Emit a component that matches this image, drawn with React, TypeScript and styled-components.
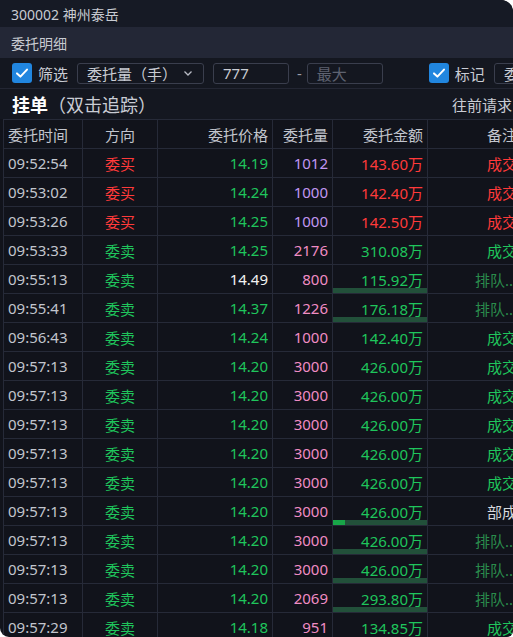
import React from 'react';
import styled, { createGlobalStyle } from 'styled-components';

const GlobalStyle = createGlobalStyle`
  html, body {
    margin: 0;
    padding: 0;
    background: #fff;
  }
  body {
    font-family: "Noto Sans", "Noto Sans CJK SC", sans-serif;
  }
`;

const red = '#ff3a3a';
const green = '#1fc55c';
const dimGreen = '#2a8c4c';

const Window = styled.div`
  width: 513px;
  height: 637px;
  overflow: hidden;
  background: #11131b;
  border-top-right-radius: 12px;
  border-bottom-left-radius: 9px;
  border-bottom-right-radius: 6px;
  display: flex;
  flex-direction: column;
  color: #c9ccd4;
`;

const TitleBar = styled.div`
  height: 27px;
  flex: none;
  display: flex;
  align-items: center;
  padding-left: 11px;
  background: #161a25;
  font-size: 14px;
  color: #c8cbd2;
`;

const SubHeader = styled.div`
  height: 31px;
  flex: none;
  display: flex;
  align-items: center;
  padding-left: 11px;
  background: #232736;
  font-size: 14px;
  color: #c8cbd2;
`;

const FilterBar = styled.div`
  height: 30px;
  flex: none;
  display: flex;
  align-items: center;
  padding-left: 12px;
  background: #141720;
  border-bottom: 1px solid #232633;
  white-space: nowrap;
  font-size: 15px;
`;

const Check = styled.span<{ $gap?: number }>`
  width: 20px;
  height: 20px;
  flex: none;
  border-radius: 3px;
  background: #2186df;
  display: flex;
  align-items: center;
  justify-content: center;
  margin-left: ${p => p.$gap ?? 0}px;
`;

const Label = styled.span`
  margin-left: 6px;
  color: #c9ccd4;
`;

const Box = styled.div<{ $w: number; $gap: number }>`
  width: ${p => p.$w}px;
  height: 21px;
  flex: none;
  box-sizing: border-box;
  border: 1px solid #3a3e4d;
  border-radius: 3px;
  margin-left: ${p => p.$gap}px;
  padding: 0 9px;
  display: flex;
  align-items: center;
  justify-content: space-between;
  font-size: 15px;
  color: #c9ccd4;
`;

const Placeholder = styled.span`
  color: #5e6270;
`;

const Dash = styled.span`
  margin-left: 8px;
  color: #9a9da6;
`;

const HeadRow = styled.div`
  height: 30px;
  flex: none;
  display: flex;
  align-items: center;
  justify-content: space-between;
  padding-left: 12px;
  background: #141720;
  white-space: nowrap;
`;

const HeadTitle = styled.div`
  font-size: 18px;
  color: #c9ccd4;
  b {
    color: #fff;
    font-weight: 700;
  }
`;

const HeadLink = styled.div`
  font-size: 15px;
  color: #c9ccd4;
  margin-right: 1px;
`;

const TableWrap = styled.div`
  flex: 1;
  padding-left: 3px;
  overflow: hidden;
`;

const Table = styled.table`
  border-collapse: collapse;
  table-layout: fixed;
  width: 640px;
  font-size: 15px;
  white-space: nowrap;
`;

const Th = styled.th<{ $align: string }>`
  height: 28px;
  padding: 0 4px;
  font-weight: 400;
  color: #c2c5cd;
  text-align: ${p => p.$align};
  border: 1px solid #262a38;
`;

const Td = styled.td<{ $align: string; $color: string; $bar?: number }>`
  height: 28px;
  padding: 0 4px;
  text-align: ${p => p.$align};
  color: ${p => p.$color};
  border: 1px solid #262a38;
  ${p =>
    p.$bar !== undefined
      ? `background-image: linear-gradient(to right, #18a648 ${p.$bar}px, #22503a ${p.$bar}px);
         background-size: 100% 5px;
         background-position: bottom;
         background-repeat: no-repeat;`
      : ''}
`;

type Row = {
  time: string;
  buy: boolean;
  price: string;
  qty: string;
  amount: string;
  note: '成交' | '排队...' | '部成';
  priceColor?: string;
  bar?: number;
};

const rows: Row[] = [
  { time: '09:52:54', buy: true, price: '14.19', qty: '1012', amount: '143.60万', note: '成交' },
  { time: '09:53:02', buy: true, price: '14.24', qty: '1000', amount: '142.40万', note: '成交' },
  { time: '09:53:26', buy: true, price: '14.25', qty: '1000', amount: '142.50万', note: '成交' },
  { time: '09:53:33', buy: false, price: '14.25', qty: '2176', amount: '310.08万', note: '成交' },
  { time: '09:55:13', buy: false, price: '14.49', qty: '800', amount: '115.92万', note: '排队...', priceColor: '#f2f2f2', bar: 0 },
  { time: '09:55:41', buy: false, price: '14.37', qty: '1226', amount: '176.18万', note: '排队...', bar: 0 },
  { time: '09:56:43', buy: false, price: '14.24', qty: '1000', amount: '142.40万', note: '成交' },
  { time: '09:57:13', buy: false, price: '14.20', qty: '3000', amount: '426.00万', note: '成交' },
  { time: '09:57:13', buy: false, price: '14.20', qty: '3000', amount: '426.00万', note: '成交' },
  { time: '09:57:13', buy: false, price: '14.20', qty: '3000', amount: '426.00万', note: '成交' },
  { time: '09:57:13', buy: false, price: '14.20', qty: '3000', amount: '426.00万', note: '成交' },
  { time: '09:57:13', buy: false, price: '14.20', qty: '3000', amount: '426.00万', note: '成交' },
  { time: '09:57:13', buy: false, price: '14.20', qty: '3000', amount: '426.00万', note: '部成', bar: 12 },
  { time: '09:57:13', buy: false, price: '14.20', qty: '3000', amount: '426.00万', note: '排队...', bar: 0 },
  { time: '09:57:13', buy: false, price: '14.20', qty: '3000', amount: '426.00万', note: '排队...', bar: 0 },
  { time: '09:57:13', buy: false, price: '14.20', qty: '2069', amount: '293.80万', note: '排队...', bar: 0 },
  { time: '09:57:29', buy: false, price: '14.18', qty: '951', amount: '134.85万', note: '成交' },
];

const noteColor = (r: Row) => {
  if (r.note === '排队...') return dimGreen;
  if (r.note === '部成') return '#d6d8de';
  return r.buy ? red : green;
};

const CheckMark = () => (
  <svg width="14" height="14" viewBox="0 0 14 14">
    <path d="M2 7.4 L5.4 10.6 L12 3.6" fill="none" stroke="#fff" strokeWidth="2" strokeLinecap="round" strokeLinejoin="round" />
  </svg>
);

const Chevron = () => (
  <svg width="12" height="12" viewBox="0 0 12 12">
    <path d="M2.5 4.5 L6 8 L9.5 4.5" fill="none" stroke="#b8bbc4" strokeWidth="1.3" />
  </svg>
);

const App = () => (
  <>
    <GlobalStyle />
    <Window>
      <TitleBar>300002 神州泰岳</TitleBar>
      <SubHeader>委托明细</SubHeader>
      <FilterBar>
        <Check><CheckMark /></Check>
        <Label>筛选</Label>
        <Box $w={127} $gap={9}>
          <span>委托量（手）</span>
          <Chevron />
        </Box>
        <Box $w={76} $gap={9}>777</Box>
        <Dash>-</Dash>
        <Box $w={76} $gap={5}><Placeholder>最大</Placeholder></Box>
        <Check $gap={46}><CheckMark /></Check>
        <Label>标记</Label>
        <Box $w={80} $gap={9}>委托量（手）</Box>
      </FilterBar>
      <HeadRow>
        <HeadTitle><b>挂单</b>（双击追踪）</HeadTitle>
        <HeadLink>往前请求</HeadLink>
      </HeadRow>
      <TableWrap>
        <Table>
          <colgroup>
            <col style={{ width: 79 }} />
            <col style={{ width: 75 }} />
            <col style={{ width: 115 }} />
            <col style={{ width: 60 }} />
            <col style={{ width: 95 }} />
            <col style={{ width: 94 }} />
            <col style={{ width: 122 }} />
          </colgroup>
          <thead>
            <tr>
              <Th $align="left">委托时间</Th>
              <Th $align="center">方向</Th>
              <Th $align="right">委托价格</Th>
              <Th $align="right">委托量</Th>
              <Th $align="right">委托金额</Th>
              <Th $align="right">备注</Th>
              <Th $align="left">操作</Th>
            </tr>
          </thead>
          <tbody>
            {rows.map((r, i) => (
              <tr key={i}>
                <Td $align="left" $color="#c2c5cd">{r.time}</Td>
                <Td $align="center" $color={r.buy ? red : green}>{r.buy ? '委买' : '委卖'}</Td>
                <Td $align="right" $color={r.priceColor ?? green}>{r.price}</Td>
                <Td $align="right" $color={r.buy ? '#c197f2' : '#f08cc4'}>{r.qty}</Td>
                <Td $align="right" $color={r.buy ? red : green} $bar={r.bar}>{r.amount}</Td>
                <Td $align="right" $color={noteColor(r)}>{r.note}</Td>
                <Td $align="left" $color="#c2c5cd"></Td>
              </tr>
            ))}
          </tbody>
        </Table>
      </TableWrap>
    </Window>
  </>
);

export default App;
